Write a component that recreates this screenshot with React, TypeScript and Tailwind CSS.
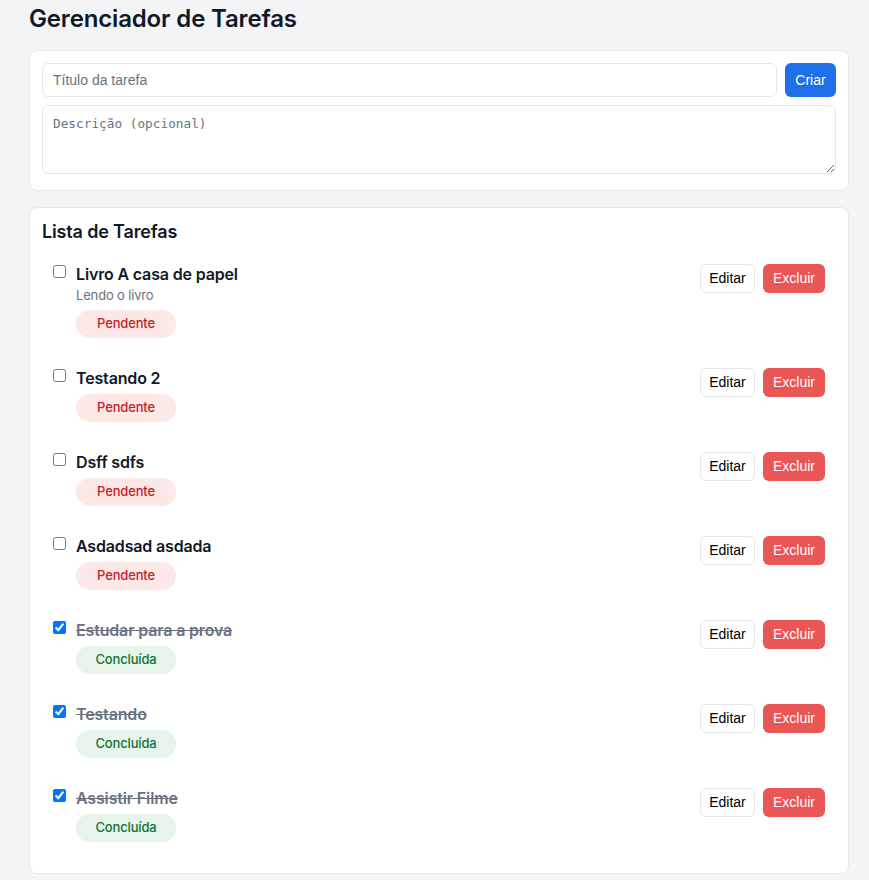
import React, { useState } from "react";

type Task = {
  id: number;
  title: string;
  description?: string;
  done: boolean;
};

const initialTasks: Task[] = [
  { id: 1, title: "Livro A casa de papel", description: "Lendo o livro", done: false },
  { id: 2, title: "Testando 2", done: false },
  { id: 3, title: "Dsff sdfs", done: false },
  { id: 4, title: "Asdadsad asdada", done: false },
  { id: 5, title: "Estudar para a prova", done: true },
  { id: 6, title: "Testando", done: true },
  { id: 7, title: "Assistir Filme", done: true },
];

export default function App() {
  const [tasks, setTasks] = useState<Task[]>(initialTasks);

  const toggle = (id: number) =>
    setTasks((prev) => prev.map((t) => (t.id === id ? { ...t, done: !t.done } : t)));

  return (
    <div className="min-h-screen bg-[#f3f4f6] font-['Inter',sans-serif] text-[#111827] tracking-[-0.01em]">
      <div className="ml-[29px] w-[820px] pt-[3px] pb-[7px]">
        <h1 className="text-[24px] leading-8 font-semibold mb-[15px]">Gerenciador de Tarefas</h1>

        {/* New task form */}
        <div className="bg-white border border-[#e5e7eb] rounded-lg px-3 pt-3 pb-4 mb-4">
          <div className="flex gap-2 mb-2">
            <input
              placeholder="Título da tarefa"
              className="flex-1 h-[34px] px-[10px] border border-[#e5e7eb] rounded-md text-[14px] tracking-normal font-['Liberation_Sans',Arial,sans-serif] placeholder:text-[#6b7280] outline-none"
            />
            <button className="h-[34px] w-[51px] rounded-md bg-[#1f6feb] text-white text-[14px] tracking-normal font-['Liberation_Sans',Arial,sans-serif]">
              Criar
            </button>
          </div>
          <textarea
            placeholder="Descrição (opcional)"
            className="block w-full h-[69px] px-[10px] py-2 border border-[#e5e7eb] rounded-md text-[12.75px] tracking-normal font-['DejaVu_Sans_Mono',monospace] placeholder:text-[#6b7280] outline-none"
          />
        </div>

        {/* Task list */}
        <div className="bg-white border border-[#e5e7eb] rounded-lg px-3 pt-3 pb-[13px]">
          <h2 className="text-[18px] leading-6 font-semibold mb-[8px]">Lista de Tarefas</h2>
          {tasks.map((t) => (
            <div key={t.id} className="flex items-start justify-between pl-[11px] pr-[11px] py-3 mb-[6px]">
              <div className="flex items-start gap-[10px]">
                <input
                  type="checkbox"
                  checked={t.done}
                  onChange={() => toggle(t.id)}
                  className="mt-[1px] w-[13px] h-[13px] accent-[#0075ff]"
                />
                <div className="flex flex-col">
                  <span
                    className={
                      t.done
                        ? "text-[16px] leading-5 font-semibold text-[#6b7280] line-through"
                        : "text-[16px] leading-5 font-semibold"
                    }
                  >
                    {t.title}
                  </span>
                  {t.description && (
                    <span className="text-[13px] leading-[18px] text-[#6b7280] mt-[2px]">{t.description}</span>
                  )}
                  <span
                    className={
                      t.done
                        ? "mt-[6px] w-[100px] h-[28px] flex items-center justify-center rounded-full bg-[#e6f4ea] text-[#137333] text-[13px] font-medium"
                        : "mt-[6px] w-[100px] h-[28px] flex items-center justify-center rounded-full bg-[#fde8e8] text-[#c5221f] text-[13px] font-medium"
                    }
                  >
                    {t.done ? "Concluída" : "Pendente"}
                  </span>
                </div>
              </div>
              <div className="flex gap-2 font-['Liberation_Sans',Arial,sans-serif] text-[14px] tracking-normal">
                <button className="h-[29px] w-[55px] border border-[#e5e7eb] rounded-md bg-white text-black">
                  Editar
                </button>
                <button className="h-[29px] w-[62px] rounded-md bg-[#e85656] text-white">Excluir</button>
              </div>
            </div>
          ))}
        </div>
      </div>
    </div>
  );
}
